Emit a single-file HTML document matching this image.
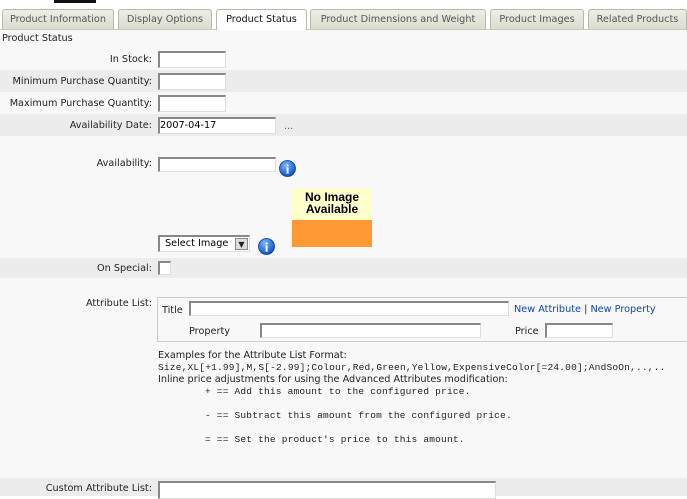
<!DOCTYPE html>
<html><head><meta charset="utf-8"><style>
*{margin:0;padding:0;box-sizing:border-box}
body{width:687px;height:496px;overflow:hidden;background:#fff;font-family:"DejaVu Sans","Liberation Sans",sans-serif;font-size:9.7px;color:#222;position:relative}
.a{position:absolute}
.tab{position:absolute;top:9px;height:20px;border:1px solid #b8b8a8;border-bottom:none;border-radius:3px 3px 0 0;background:linear-gradient(#eceee4,#dcdcd0);color:#555;text-align:center;line-height:19px;font-size:9.7px}
.tab.on{background:#fff;color:#111;height:21px}
.row{position:absolute;left:0;width:687px}
.g{background:#ececec}.l{background:#f8f8f8}
.lab{position:absolute;text-align:right;width:152px;left:0}
.in{position:absolute;background:#fff;border:1px solid #ddd;border-top:2px solid #888;border-left:2px solid #888}
.mono{font-family:"Liberation Mono",monospace;font-size:9.5px;white-space:pre;position:absolute;letter-spacing:0.2px}
a{color:#1144bb;text-decoration:none}
</style></head><body>
<div class="a" style="left:54px;top:0;width:42px;height:3px;background:#111"></div>
<div class="a" style="left:0;top:29px;width:687px;height:1px;background:#c8c8b8"></div>
<div class="tab" style="left:2px;width:112px">Product Information</div>
<div class="tab" style="left:118px;width:94px">Display Options</div>
<div class="tab on" style="left:216px;width:91px">Product Status</div>
<div class="tab" style="left:310px;width:176px">Product Dimensions and Weight</div>
<div class="tab" style="left:490px;width:94px">Product Images</div>
<div class="tab" style="left:588px;width:99px">Related Products</div>

<div class="row l" style="top:30px;height:448px"></div>
<div class="row g" style="top:70px;height:22px"></div>
<div class="row g" style="top:114px;height:22px"></div>
<div class="row g" style="top:258px;height:20px"></div>
<div class="row g" style="top:478px;height:18px"></div>

<div class="a" style="left:2px;top:33px">Product Status</div>
<div class="lab" style="top:54px">In Stock:</div><div class="in" style="left:158px;top:51px;width:68px;height:17px"></div>
<div class="lab" style="top:76px">Minimum Purchase Quantity:</div><div class="in" style="left:158px;top:73px;width:68px;height:17px"></div>
<div class="lab" style="top:98px">Maximum Purchase Quantity:</div><div class="in" style="left:158px;top:95px;width:68px;height:17px"></div>
<div class="lab" style="top:120px">Availability Date:</div><div class="in" style="left:158px;top:117px;width:118px;height:17px;padding-left:0;font-size:9.7px;line-height:13px;color:#000">2007-04-17</div>
<div class="a" style="left:284px;top:121px;color:#555">...</div>

<div class="lab" style="top:158px">Availability:</div><div class="in" style="left:158px;top:157px;width:118px;height:15px"></div>
<svg class="a" style="left:279px;top:160px" width="17" height="17" viewBox="0 0 17 17"><defs><radialGradient id="b" cx=".4" cy=".3" r=".7"><stop offset="0" stop-color="#7ab8ff"/><stop offset="1" stop-color="#0a4fc8"/></radialGradient></defs><circle cx="8.5" cy="8.5" r="8" fill="url(#b)" stroke="#0a3a90" stroke-width=".8"/><text x="8.5" y="13.5" fill="#fff" font-family="Liberation Serif,serif" font-weight="bold" font-size="13" text-anchor="middle">i</text></svg>
<div class="a" style="left:292px;top:188px;width:80px;height:32px;background:#ffffcc;text-align:center;font-weight:bold;font-size:12px;line-height:12px;padding-top:3px;color:#000;font-family:'Liberation Sans',sans-serif">No Image<br>Available</div>
<div class="a" style="left:292px;top:220px;width:80px;height:27px;background:#ff9933"></div>
<div class="in" style="left:158px;top:235px;width:92px;height:17px;line-height:13px;padding-left:5px;font-size:9.7px;color:#000">Select Image</div>
<div class="a" style="left:235px;top:238px;width:13px;height:12px;background:#ddd;border:1px solid #888;font-size:8px;text-align:center;line-height:11px">▼</div>
<svg class="a" style="left:258px;top:238px" width="17" height="17" viewBox="0 0 17 17"><circle cx="8.5" cy="8.5" r="8" fill="url(#b)" stroke="#0a3a90" stroke-width=".8"/><text x="8.5" y="13.5" fill="#fff" font-family="Liberation Serif,serif" font-weight="bold" font-size="13" text-anchor="middle">i</text></svg>

<div class="lab" style="top:263px">On Special:</div><div class="in" style="left:158px;top:261px;width:13px;height:14px"></div>

<div class="lab" style="top:298px">Attribute List:</div>
<div class="a" style="left:157px;top:297px;width:540px;height:45px;border:1px solid #ccc"></div>
<div class="a" style="left:162px;top:305px">Title</div><div class="in" style="left:189px;top:301px;width:320px;height:15px"></div>
<div class="a" style="left:514px;top:304px"><a>New Attribute</a> | <a>New Property</a></div>
<div class="a" style="left:189px;top:326px">Property</div><div class="in" style="left:260px;top:323px;width:221px;height:15px"></div>
<div class="a" style="left:515px;top:326px">Price</div><div class="in" style="left:545px;top:323px;width:68px;height:15px"></div>

<div class="a" style="left:158px;top:350px">Examples for the Attribute List Format:</div>
<div class="mono" style="left:158px;top:362px">Size,XL[+1.99],M,S[-2.99];Colour,Red,Green,Yellow,ExpensiveColor[=24.00];AndSoOn,..,..</div>
<div class="a" style="left:158px;top:374px">Inline price adjustments for using the Advanced Attributes modification:</div>
<div class="mono" style="left:205px;top:386px">+ == Add this amount to the configured price.</div>
<div class="mono" style="left:205px;top:410px">- == Subtract this amount from the configured price.</div>
<div class="mono" style="left:205px;top:434px">= == Set the product's price to this amount.</div>

<div class="lab" style="top:483px">Custom Attribute List:</div>
<div class="in" style="left:158px;top:481px;width:338px;height:18px"></div>
</body></html>
